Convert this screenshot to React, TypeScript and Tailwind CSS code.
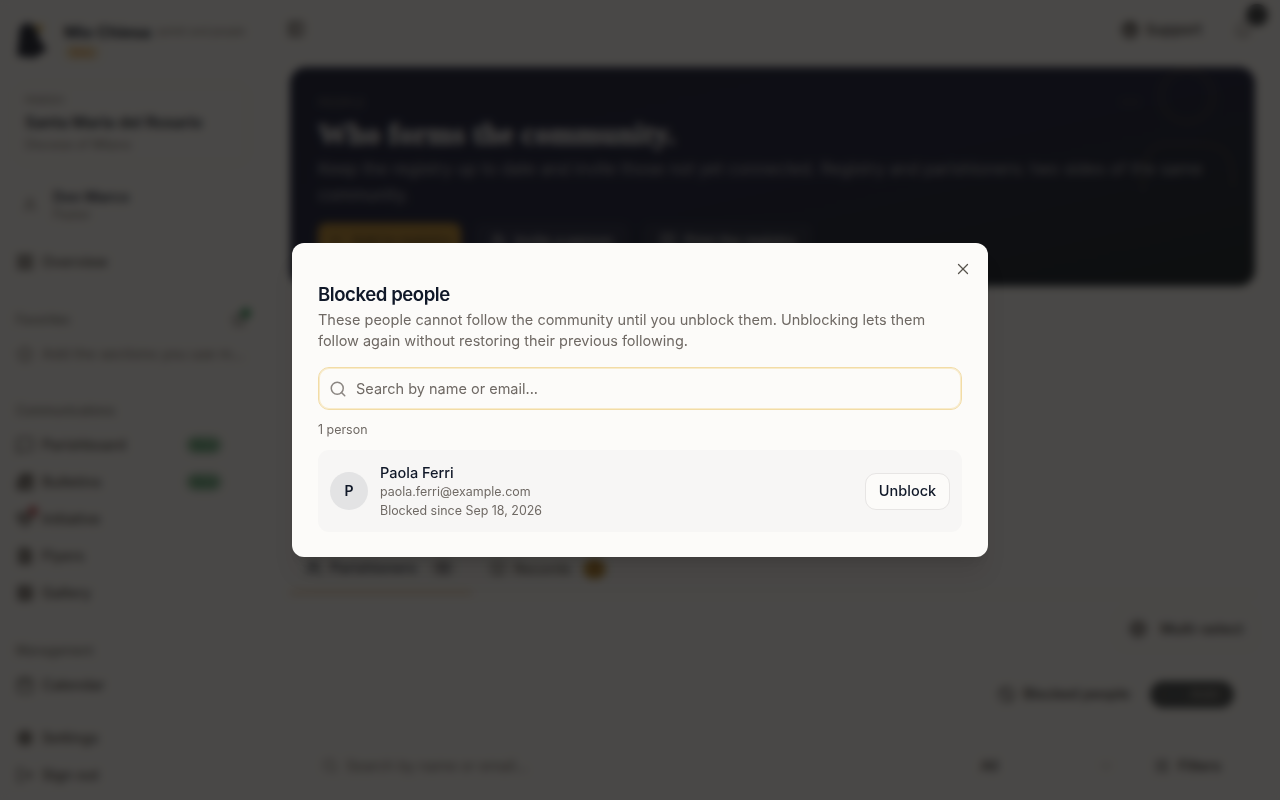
import React from "react";
import {
  Bell,
  BookOpen,
  Calendar,
  ChevronDown,
  CircleHelp,
  FileText,
  Image,
  LayoutGrid,
  LogOut,
  MessageSquare,
  Newspaper,
  PanelLeft,
  Plus,
  Search,
  Settings,
  SlidersHorizontal,
  Star,
  User,
  UserPlus,
  Users,
  X,
  Ban,
  CircleCheck,
  Heart,
} from "lucide-react";

interface NavItemProps {
  icon: React.ElementType;
  label: string;
  badge?: string;
  dot?: boolean;
  muted?: boolean;
  filled?: boolean;
}

interface BlockedPerson {
  id: string;
  name: string;
  email: string;
  since: string;
}

const blockedPeople: BlockedPerson[] = [
  {
    id: "1",
    name: "Paola Ferri",
    email: "paola.ferri@example.com",
    since: "Sep 18, 2026",
  },
];

const communicationItems: NavItemProps[] = [
  { icon: MessageSquare, label: "Parishboard", badge: "New" },
  { icon: Newspaper, label: "Bulletins", badge: "New", filled: true },
  { icon: Heart, label: "Initiative", dot: true, filled: true },
  { icon: FileText, label: "Flyers", filled: true },
  { icon: Image, label: "Gallery", filled: true },
];

const NavItem: React.FC<NavItemProps> = ({ icon: Icon, label, badge, dot, muted, filled }) => (
  <div
    className={`flex h-[37px] shrink-0 items-center gap-2 text-[14.5px] whitespace-nowrap ${
      muted ? "text-stone-500" : "font-medium text-stone-700"
    }`}
  >
    <span className="relative flex">
      <Icon className={`h-[18px] w-[18px] ${filled ? "fill-stone-500/60" : ""}`} />
      {dot && <span className="absolute -top-1 -right-1 h-2.5 w-2.5 rounded-full bg-[#c0555c]" />}
    </span>
    <span>{label}</span>
    {badge && (
      <span className="mr-[26px] ml-auto rounded-full bg-[#9cc4a6] px-1.5 py-0.5 text-[11px] leading-[14px] text-green-700">
        {badge}
      </span>
    )}
  </div>
);

const NavLabel: React.FC<{ children: React.ReactNode }> = ({ children }) => (
  <div className="flex h-[30px] shrink-0 items-center justify-between text-[12.5px] text-stone-600">
    {children}
  </div>
);

const Sidebar = () => (
  <aside className="flex w-[272px] shrink-0 flex-col pr-6 pl-4">
    <div className="mt-5 flex h-[44px] items-start gap-4">
      <svg viewBox="0 0 32 40" className="h-10 w-8 shrink-0">
        <path d="M4 7 L12 2 L20 8 L24 20 L31 30 L18 38 L1 36 Z" fill="#161b2b" />
        <path d="M18 5 L27 5 L25 13 Z" fill="#d9a223" />
      </svg>
      <div className="flex flex-col gap-1 pt-[3px]">
        <div className="flex items-center gap-1.5 leading-[18px] whitespace-nowrap">
          <span className="text-[16px] font-bold text-gray-900">Mio Chiesa</span>
          <span className="text-[10.8px] tracking-[-0.2px] text-stone-500">parish and people</span>
        </div>
        <span className="flex h-[15px] w-9 items-center justify-center rounded-full bg-[#f3e6c4] text-[10px] text-amber-600">
          Beta
        </span>
      </div>
    </div>

    <div className="mt-5 flex h-[80px] flex-col rounded-xl border border-stone-200/70 px-2 pt-[7px]">
      <span className="text-[11px] leading-4 text-stone-500">PARISH</span>
      <span className="pt-[3px] text-[15.6px] leading-6 font-semibold text-gray-900">Santa Maria del Rosario</span>
      <span className="text-[12.5px] leading-5 text-stone-500">Diocese of Milano</span>
    </div>

    <div className="mt-[21px] flex h-[40px] items-center gap-[13px] pl-1">
      <User className="h-4 w-5 text-stone-500" />
      <div className="flex flex-col">
        <span className="text-[14.5px] leading-5 font-semibold text-gray-800">Don Marco</span>
        <span className="text-[12.5px] leading-4 text-stone-500">Pastor</span>
      </div>
    </div>

    <div className="mt-[18px]">
      <NavItem icon={LayoutGrid} label="Overview" filled />
    </div>
    <div className="mt-[25px]">
      <NavLabel>
        Favorites
        <span className="relative mr-px flex">
          <Star className="h-4 w-4" />
          <span className="absolute -top-1 -right-1 h-2.5 w-2.5 rounded-full bg-green-700/80" />
        </span>
      </NavLabel>
      <NavItem icon={Star} label="Add the sections you use m…" muted />
    </div>
    <div className="mt-6">
      <NavLabel>Communications</NavLabel>
      {communicationItems.map(item => (
        <NavItem key={item.label} {...item} />
      ))}
    </div>
    <div className="mt-[25px]">
      <NavLabel>Management</NavLabel>
      <NavItem icon={Calendar} label="Calendar" />
    </div>
    <div className="mt-4">
      <NavItem icon={Settings} label="Settings" filled />
      <NavItem icon={LogOut} label="Sign out" />
    </div>
  </aside>
);

const Hero = () => (
  <section className="relative h-[219px] shrink-0 overflow-hidden rounded-2xl bg-linear-to-br from-[#101632] via-[#121735] via-50% to-[#0f191f] px-7 pt-[27px]">
    <svg viewBox="0 0 200 180" className="absolute top-0 right-0 h-[180px] w-[200px]" fill="none" stroke="#5b5138" strokeOpacity="0.7" strokeWidth="2">
      <circle cx="132" cy="29" r="26" />
      <path d="M66 35 H84" />
      <path d="M88 125 C88 70 102 77 132 77 C168 77 178 80 178 120" />
    </svg>
    <p className="text-[11.5px] leading-[18px] tracking-wider text-stone-500">PEOPLE</p>
    <h1 className="mt-px font-[Liberation_Serif,serif] text-[30px] leading-[42px] font-bold tracking-[0.3px] text-stone-200 [-webkit-text-stroke:0.8px_#e7e5e4]">
      Who forms the community.
    </h1>
    <p className="mt-px text-[16.6px] leading-[26px] text-stone-300/80">
      Keep the registry up to date and invite those not yet connected. Registry and parishioners: two sides of the same
      community.
    </p>
    <div className="mt-[15px] flex gap-3.5 text-sm font-medium">
      <span className="flex h-9 w-[143px] items-center justify-center gap-2 rounded-lg bg-[#b9862a] text-[#4d3810]">
        <Plus className="h-4 w-4" />
        Add to registry
      </span>
      <span className="flex h-9 w-[154px] items-center justify-center gap-2 rounded-lg bg-white/5 text-stone-300">
        <UserPlus className="h-4 w-4" />
        Invite a person
      </span>
      <span className="flex h-9 w-[170px] items-center justify-center gap-2 rounded-lg bg-white/5 text-stone-300">
        <BookOpen className="h-4 w-4" />
        Print the registry
      </span>
    </div>
  </section>
);

const ParishPage = () => (
  <div className="flex h-full bg-[#fcfbf9]" aria-hidden="true">
    <Sidebar />
    <main className="flex flex-1 flex-col pr-[25px] pl-[18px]">
      <header className="flex h-[67px] shrink-0 items-start justify-between pt-[19px]">
        <PanelLeft className="ml-[-3px] h-5 w-[18px] fill-stone-500/30 text-stone-700" />
        <div className="flex items-center gap-8 pr-[3px] text-[14.8px] font-medium text-stone-800">
          <span className="flex items-center gap-1.5">
            <CircleHelp className="h-[18px] w-[18px] fill-stone-500/50" strokeWidth={2.5} />
            Support
          </span>
          <span className="relative flex">
            <Bell className="h-[18px] w-[18px] text-stone-500" />
            <span className="absolute -top-[17px] -right-4 h-[22px] w-[22px] rounded-full bg-[#383c40]" />
          </span>
        </div>
      </header>
      <Hero />

      <div className="mt-[257px] flex h-[52px] shrink-0 border-b border-stone-200 text-[14.5px] font-medium">
        <div className="flex w-[182px] items-center gap-2 border-b-[3px] border-[#e8c9a0] pt-[2px] pl-4 text-gray-800">
          <Users className="h-4 w-4" />
          Parishioners
          <span className="ml-1.5 rounded-full bg-stone-300 px-1.5 text-xs">12</span>
        </div>
        <div className="flex items-center gap-2 pl-[18px] text-stone-600">
          <BookOpen className="h-4 w-4" />
          Records
          <span className="ml-1 rounded-full bg-[#b9892d] px-2 text-xs leading-5 text-amber-900">3</span>
        </div>
      </div>

      <div className="mt-[15px] flex h-[38px] shrink-0 justify-end">
        <span className="flex w-[138px] items-center justify-center gap-3.5 rounded-lg border border-stone-200 text-[14.5px] font-medium text-stone-800">
          <CircleCheck className="h-[18px] w-[18px] fill-stone-500/50" />
          Multi-select
        </span>
      </div>

      <div className="mt-5 flex h-[52px] shrink-0 items-center justify-end gap-5 pr-[21px] text-[14.5px] font-medium text-stone-800">
        <span className="flex items-center gap-2">
          <Ban className="h-[17px] w-[17px]" />
          Blocked people
        </span>
        <span className="flex h-[27px] w-[84px] items-center justify-center gap-2 rounded-full bg-[#43484a] text-stone-400">
          <Plus className="h-4 w-4 text-gray-700" />
          Add
        </span>
      </div>

      <div className="mt-[27px] flex h-[38px] shrink-0 items-center pl-8 text-[14.5px] text-stone-500">
        <Search className="mr-2 h-4 w-4" />
        Search by name or email...
        <span className="mr-[100px] ml-auto font-medium text-stone-800">All</span>
        <ChevronDown className="mr-10 h-4 w-4 text-stone-400" />
        <span className="flex items-center gap-2 pr-[34px] font-medium text-stone-800">
          <SlidersHorizontal className="h-4 w-4" />
          Filters
        </span>
      </div>
    </main>
  </div>
);

const BlockedPeopleDialog = () => (
  <div
    role="dialog"
    className="relative h-[314px] w-[696px] rounded-xl bg-[#fcfbf9] px-[26px] pt-[41px] text-gray-900 shadow-xl"
  >
    <button className="absolute top-[17px] right-[16.5px] flex h-[18px] w-[18px] items-center justify-center text-stone-600">
      <X className="h-[18px] w-[18px]" strokeWidth={1.75} />
    </button>
    <h2 className="text-[18.6px] leading-[21px] font-semibold tracking-[-0.45px]">Blocked people</h2>
    <p className="mt-1 text-[14.49px] leading-[21px] text-[#6f6964]">
      These people cannot follow the community until you unblock them. Unblocking lets them follow again without
      restoring their previous following.
    </p>
    <div className="mt-4 flex h-[43px] items-center gap-[9px] rounded-[11px] border border-[#f2dca6] pl-[10px] shadow-[inset_0_0_0_1px_#f8ebcb]">
      <Search className="h-[18px] w-[18px] text-[#8b8682]" />
      <input
        type="text"
        placeholder="Search by name or email..."
        className="flex-1 bg-transparent text-[14.5px] outline-none placeholder:text-[#6f6964]"
      />
    </div>
    <p className="mt-2.5 text-[12.45px] leading-[19px] text-[#6f6964]">1 person</p>
    {blockedPeople.map(person => (
      <div key={person.id} className="mt-[11px] flex h-[82px] items-center rounded-[11px] bg-[#f7f6f5] px-3">
        <div className="flex h-[38px] w-[38px] items-center justify-center rounded-full bg-[#e3e3e4] text-sm font-semibold">
          {person.name[0]}
        </div>
        <div className="ml-3 flex flex-1 flex-col text-[12.45px] leading-[19px] text-[#6f6964]">
          <span className="text-[14.5px] font-medium text-gray-900">{person.name}</span>
          <span>{person.email}</span>
          <span>Blocked since {person.since}</span>
        </div>
        <button className="h-[37px] w-[85px] rounded-[11px] border border-stone-200 bg-[#fcfbf9] text-[14.5px] font-medium">
          Unblock
        </button>
      </div>
    ))}
  </div>
);

const App: React.FC = () => {
  return (
    <div className="relative h-screen w-screen overflow-hidden font-[Inter,sans-serif]">
      <ParishPage />
      <div className="absolute inset-0 flex items-center justify-center bg-[#0d0c0b]/75 backdrop-blur-[4px]">
        <BlockedPeopleDialog />
      </div>
    </div>
  );
};

export default App;
